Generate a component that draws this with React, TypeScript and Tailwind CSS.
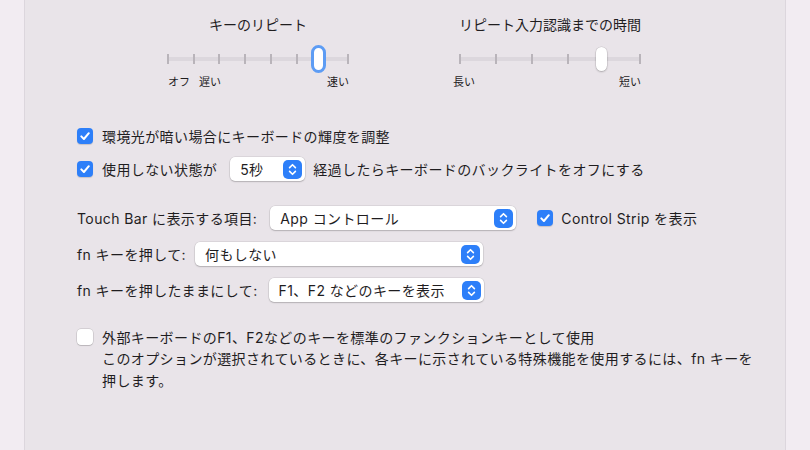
import type { ReactNode } from "react";

const FONT = 'Inter, "Noto Sans CJK JP", sans-serif';

function Check({ on }: { on: boolean }) {
  if (!on) {
    return (
      <div className="w-[16px] h-[16px] shrink-0 rounded-[4px] bg-white shadow-[0_0_0_0.5px_rgba(0,0,0,0.18),0_1px_1px_rgba(0,0,0,0.12)]" />
    );
  }
  return (
    <div className="w-[16px] h-[16px] shrink-0 rounded-[4px] bg-[#2d7ff9] flex items-center justify-center shadow-[0_1px_1px_rgba(0,0,0,0.15)]">
      <svg width="12" height="12" viewBox="0 0 12 12" fill="none">
        <path d="M2.3 6.4 L4.9 9 L9.8 3.2" stroke="white" strokeWidth="2" strokeLinecap="round" strokeLinejoin="round" />
      </svg>
    </div>
  );
}

function Stepper() {
  return (
    <div className="w-[19px] h-[19px] rounded-[5px] bg-[#2d7ff9] flex items-center justify-center">
      <svg width="19" height="19" viewBox="0 0 19 19" fill="none">
        <path d="M6.6 7.6 L9.5 4.7 L12.4 7.6" stroke="white" strokeWidth="1.6" strokeLinecap="round" strokeLinejoin="round" />
        <path d="M6.6 11.4 L9.5 14.3 L12.4 11.4" stroke="white" strokeWidth="1.6" strokeLinecap="round" strokeLinejoin="round" />
      </svg>
    </div>
  );
}

function Select({ value, className }: { value: string; className: string }) {
  return (
    <div
      className={`h-[24px] shrink-0 rounded-[5px] bg-white flex items-center justify-between pl-[10px] pr-[3px] shadow-[0_0_0_0.5px_rgba(0,0,0,0.12),0_1px_1.5px_rgba(0,0,0,0.18)] ${className}`}
    >
      <span className="whitespace-nowrap">{value}</span>
      <Stepper />
    </div>
  );
}

function Slider({
  title,
  ticks,
  thumbLeft,
  focused,
  labels,
}: {
  title: string;
  ticks: number;
  thumbLeft: number;
  focused: boolean;
  labels: ReactNode;
}) {
  return (
    <div className="w-[182px] flex flex-col">
      <div className="h-[20px] flex justify-center text-[14px] leading-[20px] whitespace-nowrap">{title}</div>
      <div className="relative h-[30px] mt-[9px] flex items-center">
        <div className="absolute left-0 right-0 top-[13px] h-[4px] bg-[#dcd7dd]" />
        <div className="relative w-full flex justify-between items-center">
          {Array.from({ length: ticks }).map((_, i) => (
            <div key={i} className="w-[2px] h-[10px] bg-[#b9b4ba]" />
          ))}
        </div>
        {focused ? (
          <div
            className="absolute top-[1px] w-[15px] h-[28px] rounded-full bg-white border-[3px] border-[#5d9cf4]"
            style={{ left: thumbLeft }}
          />
        ) : (
          <div
            className="absolute top-[3px] w-[11px] h-[24px] rounded-full bg-white shadow-[0_0_0_0.5px_rgba(0,0,0,0.12),0_1px_2px_rgba(0,0,0,0.22)]"
            style={{ left: thumbLeft }}
          />
        )}
      </div>
      <div className="mt-[1px] h-[14px] text-[11px] leading-[14px] flex whitespace-nowrap">{labels}</div>
    </div>
  );
}

export default function App() {
  return (
    <div
      className="w-[810px] h-[450px] flex bg-[#f2ecf2] text-[#1f1d1f] overflow-hidden"
      style={{ fontFamily: FONT }}
    >
      <div className="w-[24px] shrink-0" />
      <div className="flex-1 bg-[#e9e4e9] border-x border-[#dcd6dd] pl-[52px] pt-[15px] flex flex-col">
        {/* key repeat sliders */}
        <div className="flex ml-[90px] gap-[110px]">
          <Slider
            title="キーのリピート"
            ticks={8}
            thumbLeft={144}
            focused
            labels={
              <div className="flex w-[187px]">
                <span className="ml-[1px]">オフ</span>
                <span className="ml-[9px]">遅い</span>
                <span className="ml-auto">速い</span>
              </div>
            }
          />
          <Slider
            title="リピート入力認識までの時間"
            ticks={6}
            thumbLeft={137}
            focused={false}
            labels={
              <div className="flex w-[191px] ml-[-6px]">
                <span>長い</span>
                <span className="ml-auto">短い</span>
              </div>
            }
          />
        </div>

        <div className="text-[14px] tracking-[0.4px]">
          <div className="mt-[37px] h-[20px] flex items-center gap-[9px]">
            <Check on />
            <span>環境光が暗い場合にキーボードの輝度を調整</span>
          </div>

          <div className="mt-[11px] h-[24px] flex items-center">
            <Check on />
            <span className="ml-[9px]">使用しない状態が</span>
            <Select value="5秒" className="w-[75px] ml-[13px]" />
            <span className="ml-[8px]">経過したらキーボードのバックライトをオフにする</span>
          </div>

          <div className="mt-[25px] h-[24px] flex items-center">
            <span className="whitespace-nowrap">Touch Bar に表示する項目:</span>
            <Select value="App コントロール" className="w-[246px] ml-[13px]" />
            <div className="ml-[21px] flex items-center gap-[8px]">
              <Check on />
              <span className="whitespace-nowrap">Control Strip を表示</span>
            </div>
          </div>

          <div className="mt-[12px] h-[24px] flex items-center">
            <span className="whitespace-nowrap">fn キーを押して:</span>
            <Select value="何もしない" className="w-[288px] ml-[9px]" />
          </div>

          <div className="mt-[12px] h-[24px] flex items-center">
            <span className="whitespace-nowrap">fn キーを押したままにして:</span>
            <Select value="F1、F2 などのキーを表示" className="w-[215px] ml-[11px]" />
          </div>

          <div className="mt-[25px] h-[20px] flex items-center gap-[9px]">
            <Check on={false} />
            <span className="whitespace-nowrap">外部キーボードのF1、F2などのキーを標準のファンクションキーとして使用</span>
          </div>
          <p className="mt-[1px] pl-[25px] leading-[22px] whitespace-nowrap">
            このオプションが選択されているときに、各キーに示されている特殊機能を使用するには、fn キーを
            <br />
            押します。
          </p>
        </div>
      </div>
      <div className="w-[24px] shrink-0" />
    </div>
  );
}
